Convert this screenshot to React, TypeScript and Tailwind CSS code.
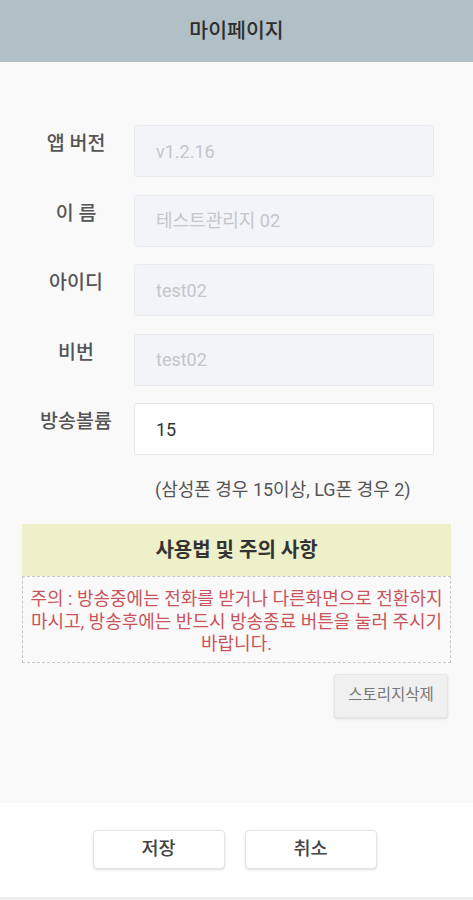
import React from "react";

const font = { fontFamily: 'Roboto, "Noto Sans CJK KR", sans-serif' };

const rows = [
  { label: "앱 버전", value: "v1.2.16", disabled: true },
  { label: "이 름", value: "테스트관리지 02", disabled: true },
  { label: "아이디", value: "test02", disabled: true },
  { label: "비번", value: "test02", disabled: true },
  { label: "방송볼륨", value: "15", disabled: false },
];

function Field({ label, value, disabled }: { label: string; value: string; disabled: boolean }) {
  return (
    <div className="flex">
      <div className="ml-[18px] w-[116px] pt-[6px] text-center text-[19.5px] leading-[26px] font-medium text-[#555]">
        {label}
      </div>
      <div
        className={
          disabled
            ? "flex h-[52px] w-[300px] items-center rounded-[3px] border border-[#e9ecef] bg-[#f2f4f7] pl-[21px] text-[18px] text-[#c3c6ca]"
            : "flex h-[52px] w-[300px] items-center rounded-[3px] border border-[#e6e6e6] bg-white pl-[21px] text-[18px] text-[#333]"
        }
      >
        {value}
      </div>
    </div>
  );
}

export default function App() {
  return (
    <div className="flex h-[900px] w-[473px] flex-col overflow-hidden bg-white" style={font}>
      <header className="flex h-[62px] shrink-0 items-center justify-center bg-[#b1bfc6]">
        <h1 className="text-[20.5px] font-medium text-[#2e2e2e]">마이페이지</h1>
      </header>

      <main className="flex flex-1 flex-col bg-[#f9f9f9] pt-[63px]">
        <div className="flex flex-col gap-[17.5px]">
          {rows.map((r) => (
            <Field key={r.label} {...r} />
          ))}
        </div>

        <p className="ml-[155px] mt-[23px] text-[18px] leading-[24px] text-[#555]">
          (삼성폰 경우 15이상, LG폰 경우 2)
        </p>

        <div className="mx-[22px] mt-[22px]">
          <div className="flex h-[52px] items-center justify-center bg-[#eef0c9] text-[20px] font-bold text-[#333]">
            사용법 및 주의 사항
          </div>
          <div className="border border-dashed border-[#c8c8c8] pb-[6px] pt-[11px] text-center text-[18px] leading-[22.5px] text-[#c9545c]">
            주의 : 방송중에는 전화를 받거나 다른화면으로 전환하지
            <br />
            마시고, 방송후에는 반드시 방송종료 버튼을 눌러 주시기
            <br />
            바랍니다.
          </div>
        </div>

        <div className="mr-[25px] mt-[11px] flex justify-end">
          <button className="h-[44px] w-[114px] rounded-[3px] border border-[#e6e6e6] bg-[#f0f0f0] text-[15.5px] text-[#777] shadow-sm">
            스토리지삭제
          </button>
        </div>
      </main>

      <footer className="flex h-[97px] shrink-0 items-start justify-center gap-[20px] border-b-[3px] border-[#eeeeee] bg-white pr-[4px] pt-[27px]">
        <button className="h-[39px] w-[132px] rounded-[4px] border border-[#e4e4e4] bg-white text-[18.5px] font-medium text-[#444] shadow-sm">
          저장
        </button>
        <button className="h-[39px] w-[132px] rounded-[4px] border border-[#e4e4e4] bg-white text-[18.5px] font-medium text-[#444] shadow-sm">
          취소
        </button>
      </footer>
    </div>
  );
}
